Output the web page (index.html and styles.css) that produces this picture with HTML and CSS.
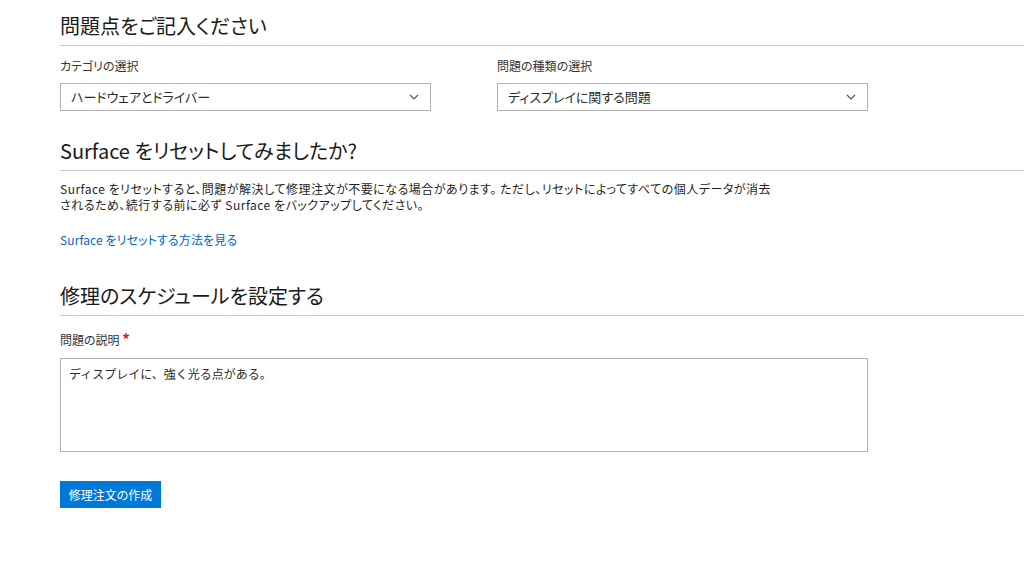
FILE: index.html
```html
<!DOCTYPE html>
<html lang="ja">
<head>
<meta charset="utf-8">
<title>問題点をご記入ください</title>
<link rel="stylesheet" href="styles.css">
</head>
<body>
<main class="page">
  <section class="section">
    <h2 class="section-title">問題点をご記入ください</h2>
    <div class="field-row">
      <div class="field">
        <label class="field-label">カテゴリの選択</label>
        <div class="select">
          <span class="select-value">ハードウェアとドライバー</span>
          <svg class="chevron" width="10" height="6" viewBox="0 0 10 6"><path d="M1 1 L5 5 L9 1" fill="none" stroke="#555" stroke-width="1.2"/></svg>
        </div>
      </div>
      <div class="field">
        <label class="field-label">問題の種類の選択</label>
        <div class="select">
          <span class="select-value">ディスプレイに関する問題</span>
          <svg class="chevron" width="10" height="6" viewBox="0 0 10 6"><path d="M1 1 L5 5 L9 1" fill="none" stroke="#555" stroke-width="1.2"/></svg>
        </div>
      </div>
    </div>
  </section>

  <section class="section section-reset">
    <h2 class="section-title">Surface をリセットしてみましたか?</h2>
    <p class="body-text">Surface をリセットすると、問題が解決して修理注文が不要になる場合があります。 ただし、リセットによってすべての個人データが消去<br>されるため、続行する前に必ず Surface をバックアップしてください。</p>
    <a class="link" href="#">Surface をリセットする方法を見る</a>
  </section>

  <section class="section section-schedule">
    <h2 class="section-title">修理のスケジュールを設定する</h2>
    <label class="field-label field-label-desc">問題の説明 <span class="required">*</span></label>
    <div class="textarea">ディスプレイに、強く光る点がある。</div>
    <button class="btn-primary" type="button">修理注文の作成</button>
  </section>
</main>
</body>
</html>
```

FILE: styles.css
```css
* { box-sizing: border-box; }

html, body {
  margin: 0;
  padding: 0;
  background: #fff;
}

body {
  font-family: "Noto Sans CJK JP", "Noto Sans", sans-serif;
  font-feature-settings: "palt";
  color: #1f1f1f;
}

.page {
  padding-left: 60px;
  display: flex;
  flex-direction: column;
}

.section {
  display: flex;
  flex-direction: column;
  align-items: flex-start;
}

.section-title {
  align-self: stretch;
  margin: 12px 0 0 0;
  padding: 0 0 5px 0;
  font-size: 20px;
  line-height: 28px;
  font-weight: 400;
  color: #1a1a1a;
  border-bottom: 1px solid #c6c6c6;
}

.section-reset .section-title { margin-top: 26px; }
.section-schedule .section-title { margin-top: 34px; }

.field-row {
  display: grid;
  grid-template-columns: 371px 371px;
  column-gap: 66px;
  margin-top: 12px;
}

.field {
  display: flex;
  flex-direction: column;
}

.field-label {
  font-size: 12px;
  line-height: 16px;
  color: #333;
}

.select {
  margin-top: 9px;
  height: 28px;
  border: 1px solid #b3b3b3;
  display: flex;
  align-items: center;
  justify-content: space-between;
  padding: 0 11px 0 10px;
  font-size: 13px;
  color: #2b2b2b;
}

.select-value { margin-top: -1px; }

.chevron { display: block; }

.body-text {
  margin: 10px 0 0 0;
  font-size: 12px;
  line-height: 16px;
  letter-spacing: 0.5px;
  color: #1f1f1f;
}

.link {
  margin-top: 19px;
  font-size: 12px;
  line-height: 16px;
  letter-spacing: 0.1px;
  color: #0067b8;
  text-decoration: none;
}

.field-label-desc { margin-top: 16px; }

.required {
  color: #e81123;
  font-size: 15px;
  line-height: 12px;
  font-weight: 700;
}

.textarea {
  margin-top: 10px;
  width: 808px;
  height: 94px;
  border: 1px solid #b3b3b3;
  padding: 7px 8px;
  font-size: 12px;
  line-height: 16px;
  font-feature-settings: normal;
  color: #2b2b2b;
}

.btn-primary {
  margin-top: 29px;
  width: 101px;
  height: 27px;
  border: none;
  background: #0078d7;
  color: #fff;
  font-family: inherit;
  font-feature-settings: "palt";
  font-size: 12px;
  padding: 0;
}
```
